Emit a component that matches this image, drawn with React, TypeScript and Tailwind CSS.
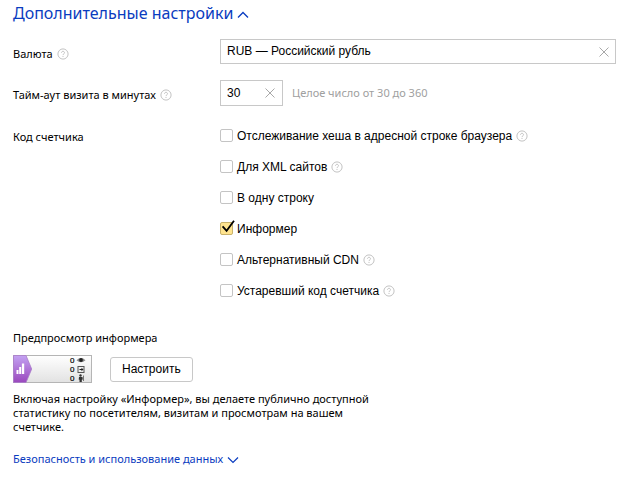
import { useState } from 'react';
import type { ReactNode } from 'react';

const ARIAL = "font-['Liberation_Sans',Arial,sans-serif]";

function Help() {
  return (
    <button type="button" aria-label="Справка" className="block h-3 w-3 shrink-0 text-[#b4b4b4]">
      <svg viewBox="0 0 12 12" className="h-3 w-3" fill="none" stroke="currentColor" strokeWidth="0.8">
        <circle cx="6" cy="6" r="5.1" />
        <path d="M4.5 4.8c0-2 3-2 3 0 0 1-1.5 1.1-1.5 2.3M6 8v1" />
      </svg>
    </button>
  );
}

function Clear({ label }: { label: string }) {
  return (
    <button type="button" aria-label={label} className="block h-3 w-3 shrink-0 text-[#a8a8a8]">
      <svg viewBox="0 0 12 12" className="h-3 w-3" fill="none" stroke="currentColor" strokeWidth="1">
        <path d="M1.5 1.5l9 9M10.5 1.5l-9 9" />
      </svg>
    </button>
  );
}

function Row({ label, children }: { label: ReactNode; children: ReactNode }) {
  return (
    <div className="flex items-center">
      <div className="flex w-[207px] shrink-0 items-center gap-1 pt-1">{label}</div>
      <div className="flex min-w-0 flex-1 items-center">{children}</div>
    </div>
  );
}

interface Option {
  id: string;
  text: string;
  help: boolean;
  on: boolean;
}

const OPTIONS: Option[] = [
  { id: 'hash', text: 'Отслеживание хеша в адресной строке браузера', help: true, on: false },
  { id: 'xml', text: 'Для XML сайтов', help: true, on: false },
  { id: 'line', text: 'В одну строку', help: false, on: false },
  { id: 'informer', text: 'Информер', help: false, on: true },
  { id: 'cdn', text: 'Альтернативный CDN', help: true, on: false },
  { id: 'old', text: 'Устаревший код счетчика', help: true, on: false },
];

function Check({ option }: { option: Option }) {
  const [on, setOn] = useState(option.on);
  return (
    <div className="flex h-[15px] items-center gap-1">
      <span className="relative block h-[13px] w-[13px] shrink-0">
        <input
          id={option.id}
          type="checkbox"
          checked={on}
          onChange={(e) => setOn(e.target.checked)}
          className="block h-[13px] w-[13px] appearance-none rounded-[2px] border border-[#c4c4c4] bg-white checked:border-[#c9b26b] checked:bg-[#ffe48f]"
        />
        {on && (
          <svg viewBox="0 0 16 15" className="pointer-events-none absolute -top-0.5 left-0 h-[15px] w-4" fill="none" stroke="#000" strokeWidth="1.8">
            <path d="M2.6 6.4l4 4.4L14 0.8" />
          </svg>
        )}
      </span>
      <label htmlFor={option.id} className={`pt-0.5 text-[12px] leading-[15px] ${ARIAL}`}>
        {option.text}
      </label>
      {option.help && <Help />}
    </div>
  );
}

function Informer() {
  return (
    <svg viewBox="0 0 79 28" className="h-7 w-[79px]" role="img" aria-label="Информер">
      <defs>
        <linearGradient id="bg" x1="0" y1="0" x2="0" y2="1">
          <stop offset="0" stopColor="#fff" />
          <stop offset="1" stopColor="#e2e2e2" />
        </linearGradient>
        <linearGradient id="violet" x1="0" y1="0" x2="0" y2="1">
          <stop offset="0" stopColor="#c3a2f2" />
          <stop offset="1" stopColor="#9a48bd" />
        </linearGradient>
      </defs>
      <rect x="0.5" y="0.5" width="78" height="27" fill="url(#bg)" stroke="#b5b5b5" />
      <path d="M0.5 0.5h12.5l5.7 13.5-5.7 13.5H0.5z" fill="url(#violet)" stroke="#a97bc9" strokeWidth="0.8" />
      <path d="M3.5 19v-4h2v4zM6.2 19v-7h2v7zM8.9 19V8.500h2.300V19z" fill="#fff" />
      <g className="font-['Liberation_Sans',Arial,sans-serif] text-[8px]" fill="#000" stroke="#000" strokeWidth="0.2">
        <text x="57" y="8">0</text>
        <text x="57" y="17">0</text>
        <text x="57" y="26">0</text>
      </g>
      <path d="M63.500 5.200q4.500-4.600 9 0-4.500 4-9 0z" fill="#888" />
      <circle cx="68" cy="5" r="1.900" fill="#222" />
      <rect x="65" y="11.500" width="6" height="6" fill="none" stroke="#555" />
      <path d="M66.500 14h2v-1.300l2 1.800-2 1.800V15h-2z" fill="#222" />
      <circle cx="67.500" cy="20.500" r="1.200" fill="#333" />
      <path d="M66 22h3.500l.3 2.500-1 .2V27h-2.300v-2.300l-.8-.2z" fill="#333" />
      <path d="M70.500 20.500v5.500" stroke="#777" />
    </svg>
  );
}

export default function App() {
  return (
    <main className="bg-white pr-3 pl-[13px] font-['Noto_Sans',sans-serif] text-[11px] leading-[14px] text-black">
      <h1>
        <button type="button" aria-expanded="true" className="flex h-[26px] items-center gap-1 text-[16px] leading-5 text-[#0a3cc0]">
          Дополнительные настройки
          <svg viewBox="0 0 12 8" className="mt-1 h-2 w-3" fill="none" stroke="currentColor" strokeWidth="1.300">
            <path d="M1 6.500l5-5 5 5" />
          </svg>
        </button>
      </h1>

      <form className="mt-[13px]" onSubmit={(e) => e.preventDefault()}>
        <Row label={<><label htmlFor="currency">Валюта</label><Help /></>}>
          <div className="flex h-[25px] flex-1 items-center border border-[#c8c8c8] pr-[5px] pl-1.5">
            <input id="currency" type="text" defaultValue="RUB — Российский рубль" className={`min-w-0 flex-1 bg-transparent text-[12px] leading-[15px] outline-none ${ARIAL}`} />
            <Clear label="Очистить валюту" />
          </div>
        </Row>
        <div className="mt-4">
          <Row label={<><label htmlFor="timeout">Тайм-аут визита в минутах</label><Help /></>}>
            <div className="flex h-[26px] w-[63px] items-center border border-[#c8c8c8] pr-1.5 pl-1.5">
              <input id="timeout" type="text" defaultValue="30" className={`min-w-0 flex-1 bg-transparent text-[12px] leading-[15px] outline-none ${ARIAL}`} />
              <Clear label="Очистить тайм-аут" />
            </div>
            <span className="ml-[9px] text-[#a0a0a0]">Целое число от 30 до 360</span>
          </Row>
        </div>
        <fieldset className="mt-[22px] flex items-start">
          <legend className="float-left w-[207px] shrink-0 pt-0.5">Код счетчика</legend>
          <div className="flex flex-col gap-4">
            {OPTIONS.map((o) => (
              <Check key={o.id} option={o} />
            ))}
          </div>
        </fieldset>
      </form>

      <section className="mt-[33px]">
        <h2>Предпросмотр информера</h2>
        <div className="mt-2.5 flex items-center gap-[18px]">
          <Informer />
          <button type="button" className={`h-[25px] rounded-[3px] border border-[#c8c8c8] px-[11px] text-[12px] leading-[15px] ${ARIAL}`}>
            Настроить
          </button>
        </div>
        <p className="mt-[9px] max-w-[370px]">
          Включая настройку «Информер», вы делаете публично доступной статистику по посетителям, визитам и просмотрам на вашем счетчике.
        </p>
      </section>

      <button type="button" aria-expanded="false" className="mt-[18px] flex items-center gap-1 text-[#0a3cc0]">
        Безопасность и использование данных
        <svg viewBox="0 0 12 8" className="mt-0.5 h-2 w-3" fill="none" stroke="currentColor" strokeWidth="1.200">
          <path d="M1 1.500l5 5 5-5" />
        </svg>
      </button>
    </main>
  );
}
